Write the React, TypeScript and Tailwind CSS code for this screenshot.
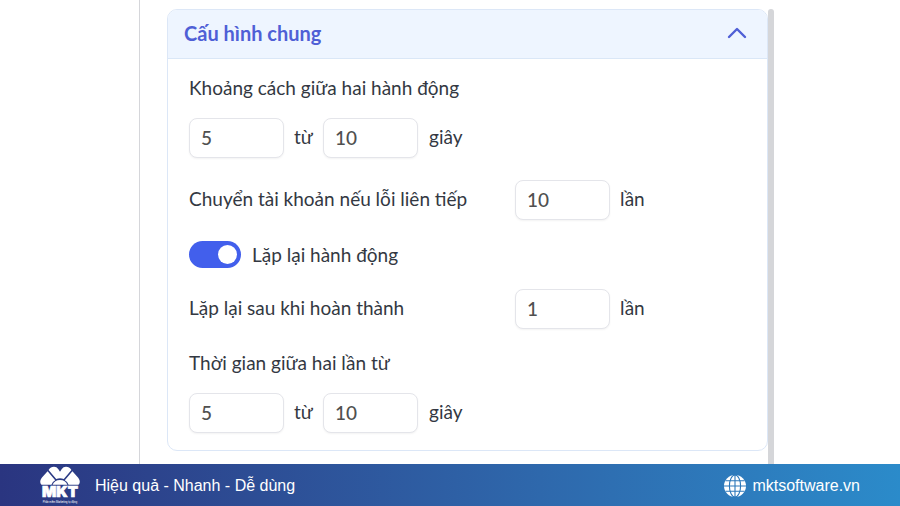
import React, { useState } from "react";

function NumberField({ label, initial }: { label: string; initial: string }) {
  const [value, setValue] = useState(initial);

  return (
    <input
      type="text"
      inputMode="numeric"
      aria-label={label}
      value={value}
      onChange={(e) => setValue(e.target.value)}
      className="h-10 w-[95px] shrink-0 rounded-lg border border-[#e4e5ea] bg-white px-[11px] pb-0.5 font-medium text-[#505050] shadow-xs outline-none"
    />
  );
}

function RangeRow({ title }: { title: string }) {
  return (
    <fieldset>
      <legend className="mb-[18px] leading-6">{title}</legend>
      <div className="flex items-center">
        <NumberField label={`${title} (từ)`} initial="5" />
        <span className="w-[39px] pb-0.5 text-center">từ</span>
        <NumberField label={`${title} (đến)`} initial="10" />
        <span className="ml-[11px] pb-0.5">giây</span>
      </div>
    </fieldset>
  );
}

function CountRow({ title, initial }: { title: string; initial: string }) {
  return (
    <div className="flex items-center">
      <span className="w-[326px] pb-0.5 leading-6">{title}</span>
      <NumberField label={title} initial={initial} />
      <span className="ml-[10px] pb-0.5">lần</span>
    </div>
  );
}

function Toggle() {
  const [on, setOn] = useState(true);

  return (
    <label className="flex h-[25px] w-fit cursor-pointer items-center gap-[11px]">
      <input
        type="checkbox"
        role="switch"
        checked={on}
        onChange={() => setOn(!on)}
        className="peer sr-only"
      />
      <span className="flex h-[27px] w-[52px] items-center rounded-full bg-gray-300 px-1 peer-checked:justify-end peer-checked:bg-[#425fec]">
        <span className="size-[19px] rounded-full bg-white" />
      </span>
      <span className="leading-6">Lặp lại hành động</span>
    </label>
  );
}

function MktLogo() {
  return (
    <svg viewBox="0 0 40 38" className="h-[38px] w-10" fill="#fff" role="img" aria-label="MKT">
      <path d="M7.6 5.2 15.2 14.2Q12.5 15.6 11.4 18.8H1.5Q-.2 17.2 .4 14.6Q.8 12.6 2 11.4Z" />
      <path d="M32.4 5.2 24.8 14.2Q27.5 15.6 28.6 18.8H38.5Q40.2 17.2 39.6 14.6Q39.2 12.6 38 11.4Z" />
      <path d="M8.6 4Q10.6 .8 14 .8Q16.8 .9 18.2 3L20 5.8 21.8 3Q23.2 .9 26 .8Q29.4 .8 31.4 4L23.8 13.1Q20 11.4 16.2 13.1Z" />
      <path d="M12.6 18.8Q14.4 13.9 20 13.9Q25.6 13.9 27.4 18.8Z" />
      <text
        x="20"
        y="31"
        textAnchor="middle"
        fontSize="15"
        fontWeight="900"
        fontFamily="Inter, sans-serif"
        stroke="#fff"
        strokeWidth=".7"
      >
        MKT
      </text>
      <text x="20" y="37" textAnchor="middle" fontSize="2.6" fontFamily="Roboto, sans-serif">
        Phần mềm Marketing tự động
      </text>
    </svg>
  );
}

function Globe() {
  return (
    <svg viewBox="0 0 24 24" className="size-6" aria-hidden="true">
      <circle cx="12" cy="12" r="11" fill="#fff" />
      <g fill="none" stroke="#2c78ba" strokeWidth="1.1">
        <path d="M12 1V23M1 12H23M2.5 6.7H21.5M2.5 17.3H21.5" />
        <ellipse cx="12" cy="12" rx="5.6" ry="11" />
      </g>
    </svg>
  );
}

export default function App() {
  const [open, setOpen] = useState(true);

  return (
    <div className="flex min-h-screen flex-col bg-white font-[Lato,'Noto_Sans',sans-serif] text-[19px] text-[#333842]">
      <div className="flex flex-1">
        <aside className="w-[140px] shrink-0 border-r border-[#d5d6da]" />
        <main className="flex flex-1 pt-[9px] pr-[126px] pl-[27px]">
          <section className="mb-[13px] flex-1 rounded-[10px] border border-[#dce7f7]">
            <h2>
              <button
                type="button"
                aria-expanded={open}
                onClick={() => setOpen(!open)}
                className="flex h-[49px] w-full items-center justify-between rounded-t-[9px] border-b border-[#dae7f7] bg-[#eef5ff] pr-5 pb-0.5 pl-4 text-xl font-bold text-[#4f5fd6]"
              >
                Cấu hình chung
                <svg viewBox="0 0 20 12" className="h-3 w-5" fill="none" aria-hidden="true">
                  <path d="M2 10 10 2 18 10" stroke="currentColor" strokeWidth="2.4" strokeLinecap="round" strokeLinejoin="round" />
                </svg>
              </button>
            </h2>
            {open && (
              <div className="flex flex-col gap-[22px] px-[21px] pt-[17px] pb-4">
                <RangeRow title="Khoảng cách giữa hai hành động" />
                <CountRow title="Chuyển tài khoản nếu lỗi liên tiếp" initial="10" />
                <Toggle />
                <CountRow title="Lặp lại sau khi hoàn thành" initial="1" />
                <RangeRow title="Thời gian giữa hai lần từ" />
              </div>
            )}
          </section>
          <div className="w-1.5 shrink-0 rounded-t-full bg-[#d5d6d9]" />
        </main>
      </div>
      <footer className="flex h-[42px] items-center justify-between bg-linear-to-r from-[#2a3580] to-[#2b8bca] px-10 font-['Liberation_Sans',sans-serif] text-base text-white">
        <div className="flex items-center gap-[15px]">
          <MktLogo />
          <span className="pt-0.5">Hiệu quả - Nhanh - Dễ dùng</span>
        </div>
        <a href="#mktsoftware" className="flex items-center gap-[5px] pt-0.5">
          <Globe />
          mktsoftware.vn
        </a>
      </footer>
    </div>
  );
}
